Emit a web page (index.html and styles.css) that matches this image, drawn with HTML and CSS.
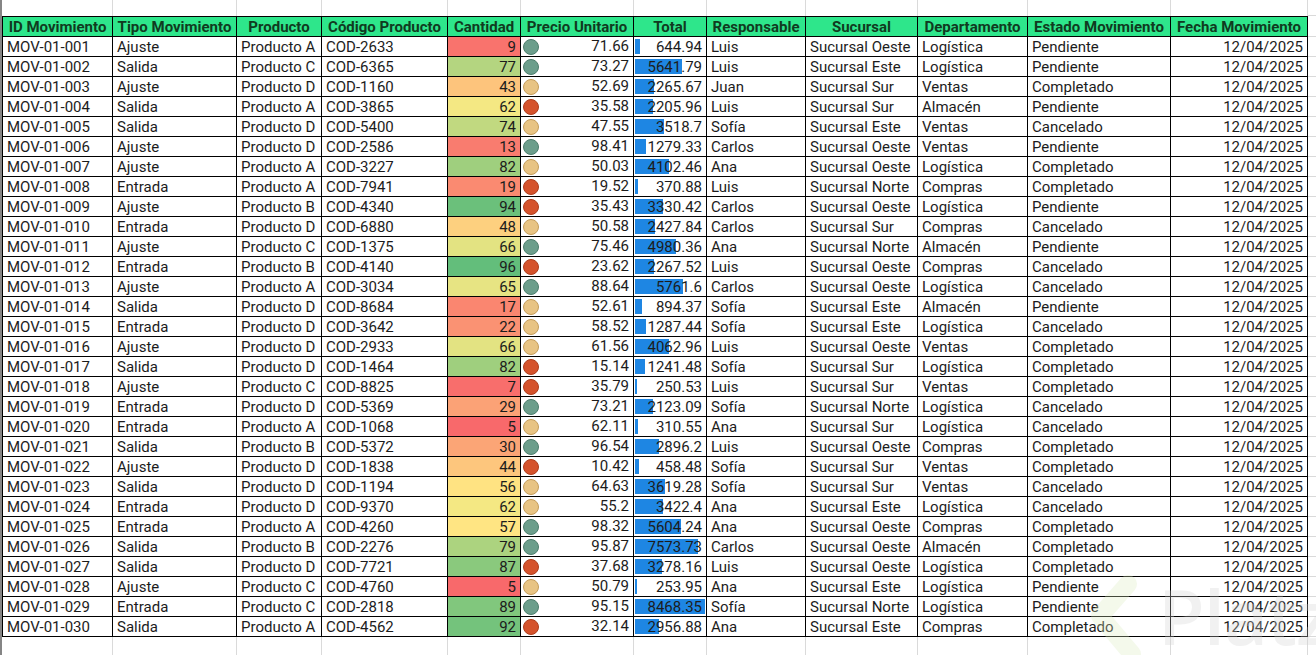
FILE: index.html
```html
<!DOCTYPE html>
<html lang="es">
<head>
<meta charset="utf-8">
<title>Movimientos</title>
<link rel="stylesheet" href="styles.css">
</head>
<body>
<div class="sheet">
  <div class="rowhdr"></div>
  <div class="grid">
    <div class="tr top"><div class="e"></div><div class="e"></div><div class="e"></div><div class="e"></div><div class="e"></div><div class="e"></div><div class="e"></div><div class="e"></div><div class="e"></div><div class="e"></div><div class="e"></div><div class="e"></div><div class="x"></div></div>
    <div class="tr head"><div class="c h">ID Movimiento</div><div class="c h">Tipo Movimiento</div><div class="c h">Producto</div><div class="c h">Código Producto</div><div class="c h">Cantidad</div><div class="c h">Precio Unitario</div><div class="c h">Total</div><div class="c h">Responsable</div><div class="c h">Sucursal</div><div class="c h">Departamento</div><div class="c h">Estado Movimiento</div><div class="c h">Fecha Movimiento</div><div class="x"></div></div>

    <div class="tr"><div class="c">MOV-01-001</div><div class="c">Ajuste</div><div class="c">Producto A</div><div class="c">COD-2633</div><div class="c num" style="background:rgb(249,115,109)">9</div><div class="c price"><i class="dot g"></i>71.66</div><div class="c num total" style="--w:5px">644.94</div><div class="c">Luis</div><div class="c">Sucursal Oeste</div><div class="c">Logística</div><div class="c">Pendiente</div><div class="c num">12/04/2025</div><div class="x"></div></div>
    <div class="tr"><div class="c">MOV-01-002</div><div class="c">Salida</div><div class="c">Producto C</div><div class="c">COD-6365</div><div class="c num" style="background:rgb(180,213,128)">77</div><div class="c price"><i class="dot g"></i>73.27</div><div class="c num total" style="--w:47px">5641.79</div><div class="c">Luis</div><div class="c">Sucursal Este</div><div class="c">Logística</div><div class="c">Pendiente</div><div class="c num">12/04/2025</div><div class="x"></div></div>
    <div class="tr"><div class="c">MOV-01-003</div><div class="c">Ajuste</div><div class="c">Producto D</div><div class="c">COD-1160</div><div class="c num" style="background:rgb(253,196,124)">43</div><div class="c price"><i class="dot y"></i>52.69</div><div class="c num total" style="--w:19px">2265.67</div><div class="c">Juan</div><div class="c">Sucursal Sur</div><div class="c">Ventas</div><div class="c">Completado</div><div class="c num">12/04/2025</div><div class="x"></div></div>
    <div class="tr"><div class="c">MOV-01-004</div><div class="c">Salida</div><div class="c">Producto A</div><div class="c">COD-3865</div><div class="c num" style="background:rgb(244,232,131)">62</div><div class="c price"><i class="dot r"></i>35.58</div><div class="c num total" style="--w:18px">2205.96</div><div class="c">Luis</div><div class="c">Sucursal Sur</div><div class="c">Almacén</div><div class="c">Pendiente</div><div class="c num">12/04/2025</div><div class="x"></div></div>
    <div class="tr"><div class="c">MOV-01-005</div><div class="c">Salida</div><div class="c">Producto D</div><div class="c">COD-5400</div><div class="c num" style="background:rgb(193,217,128)">74</div><div class="c price"><i class="dot y"></i>47.55</div><div class="c num total" style="--w:29px">3518.7</div><div class="c">Sofía</div><div class="c">Sucursal Este</div><div class="c">Ventas</div><div class="c">Cancelado</div><div class="c num">12/04/2025</div><div class="x"></div></div>
    <div class="tr"><div class="c">MOV-01-006</div><div class="c">Ajuste</div><div class="c">Producto D</div><div class="c">COD-2586</div><div class="c num" style="background:rgb(249,124,111)">13</div><div class="c price"><i class="dot g"></i>98.41</div><div class="c num total" style="--w:11px">1279.33</div><div class="c">Carlos</div><div class="c">Sucursal Oeste</div><div class="c">Ventas</div><div class="c">Pendiente</div><div class="c num">12/04/2025</div><div class="x"></div></div>
    <div class="tr"><div class="c">MOV-01-007</div><div class="c">Ajuste</div><div class="c">Producto A</div><div class="c">COD-3227</div><div class="c num" style="background:rgb(159,207,126)">82</div><div class="c price"><i class="dot y"></i>50.03</div><div class="c num total" style="--w:34px">4102.46</div><div class="c">Ana</div><div class="c">Sucursal Oeste</div><div class="c">Logística</div><div class="c">Completado</div><div class="c num">12/04/2025</div><div class="x"></div></div>
    <div class="tr"><div class="c">MOV-01-008</div><div class="c">Entrada</div><div class="c">Producto A</div><div class="c">COD-7941</div><div class="c num" style="background:rgb(250,138,113)">19</div><div class="c price"><i class="dot r"></i>19.52</div><div class="c num total" style="--w:3px">370.88</div><div class="c">Luis</div><div class="c">Sucursal Norte</div><div class="c">Compras</div><div class="c">Completado</div><div class="c num">12/04/2025</div><div class="x"></div></div>
    <div class="tr"><div class="c">MOV-01-009</div><div class="c">Ajuste</div><div class="c">Producto B</div><div class="c">COD-4340</div><div class="c num" style="background:rgb(107,192,123)">94</div><div class="c price"><i class="dot r"></i>35.43</div><div class="c num total" style="--w:28px">3330.42</div><div class="c">Carlos</div><div class="c">Sucursal Oeste</div><div class="c">Logística</div><div class="c">Pendiente</div><div class="c num">12/04/2025</div><div class="x"></div></div>
    <div class="tr"><div class="c">MOV-01-010</div><div class="c">Entrada</div><div class="c">Producto D</div><div class="c">COD-6880</div><div class="c num" style="background:rgb(253,208,127)">48</div><div class="c price"><i class="dot y"></i>50.58</div><div class="c num total" style="--w:20px">2427.84</div><div class="c">Carlos</div><div class="c">Sucursal Sur</div><div class="c">Compras</div><div class="c">Cancelado</div><div class="c num">12/04/2025</div><div class="x"></div></div>
    <div class="tr"><div class="c">MOV-01-011</div><div class="c">Ajuste</div><div class="c">Producto C</div><div class="c">COD-1375</div><div class="c num" style="background:rgb(227,227,130)">66</div><div class="c price"><i class="dot g"></i>75.46</div><div class="c num total" style="--w:41px">4980.36</div><div class="c">Ana</div><div class="c">Sucursal Norte</div><div class="c">Almacén</div><div class="c">Pendiente</div><div class="c num">12/04/2025</div><div class="x"></div></div>
    <div class="tr"><div class="c">MOV-01-012</div><div class="c">Entrada</div><div class="c">Producto B</div><div class="c">COD-4140</div><div class="c num" style="background:rgb(99,190,123)">96</div><div class="c price"><i class="dot r"></i>23.62</div><div class="c num total" style="--w:19px">2267.52</div><div class="c">Luis</div><div class="c">Sucursal Oeste</div><div class="c">Compras</div><div class="c">Cancelado</div><div class="c num">12/04/2025</div><div class="x"></div></div>
    <div class="tr"><div class="c">MOV-01-013</div><div class="c">Ajuste</div><div class="c">Producto A</div><div class="c">COD-3034</div><div class="c num" style="background:rgb(231,228,131)">65</div><div class="c price"><i class="dot g"></i>88.64</div><div class="c num total" style="--w:48px">5761.6</div><div class="c">Carlos</div><div class="c">Sucursal Oeste</div><div class="c">Logística</div><div class="c">Cancelado</div><div class="c num">12/04/2025</div><div class="x"></div></div>
    <div class="tr"><div class="c">MOV-01-014</div><div class="c">Salida</div><div class="c">Producto D</div><div class="c">COD-8684</div><div class="c num" style="background:rgb(250,134,112)">17</div><div class="c price"><i class="dot y"></i>52.61</div><div class="c num total" style="--w:7px">894.37</div><div class="c">Sofía</div><div class="c">Sucursal Este</div><div class="c">Almacén</div><div class="c">Pendiente</div><div class="c num">12/04/2025</div><div class="x"></div></div>
    <div class="tr"><div class="c">MOV-01-015</div><div class="c">Entrada</div><div class="c">Producto D</div><div class="c">COD-3642</div><div class="c num" style="background:rgb(250,146,115)">22</div><div class="c price"><i class="dot y"></i>58.52</div><div class="c num total" style="--w:11px">1287.44</div><div class="c">Sofía</div><div class="c">Sucursal Este</div><div class="c">Logística</div><div class="c">Cancelado</div><div class="c num">12/04/2025</div><div class="x"></div></div>
    <div class="tr"><div class="c">MOV-01-016</div><div class="c">Ajuste</div><div class="c">Producto D</div><div class="c">COD-2933</div><div class="c num" style="background:rgb(227,227,130)">66</div><div class="c price"><i class="dot y"></i>61.56</div><div class="c num total" style="--w:34px">4062.96</div><div class="c">Luis</div><div class="c">Sucursal Oeste</div><div class="c">Ventas</div><div class="c">Completado</div><div class="c num">12/04/2025</div><div class="x"></div></div>
    <div class="tr"><div class="c">MOV-01-017</div><div class="c">Salida</div><div class="c">Producto D</div><div class="c">COD-1464</div><div class="c num" style="background:rgb(159,207,126)">82</div><div class="c price"><i class="dot r"></i>15.14</div><div class="c num total" style="--w:10px">1241.48</div><div class="c">Sofía</div><div class="c">Sucursal Sur</div><div class="c">Logística</div><div class="c">Completado</div><div class="c num">12/04/2025</div><div class="x"></div></div>
    <div class="tr"><div class="c">MOV-01-018</div><div class="c">Ajuste</div><div class="c">Producto C</div><div class="c">COD-8825</div><div class="c num" style="background:rgb(248,110,108)">7</div><div class="c price"><i class="dot r"></i>35.79</div><div class="c num total" style="--w:2px">250.53</div><div class="c">Luis</div><div class="c">Sucursal Sur</div><div class="c">Ventas</div><div class="c">Completado</div><div class="c num">12/04/2025</div><div class="x"></div></div>
    <div class="tr"><div class="c">MOV-01-019</div><div class="c">Entrada</div><div class="c">Producto D</div><div class="c">COD-5369</div><div class="c num" style="background:rgb(251,162,118)">29</div><div class="c price"><i class="dot g"></i>73.21</div><div class="c num total" style="--w:18px">2123.09</div><div class="c">Sofía</div><div class="c">Sucursal Norte</div><div class="c">Logística</div><div class="c">Cancelado</div><div class="c num">12/04/2025</div><div class="x"></div></div>
    <div class="tr"><div class="c">MOV-01-020</div><div class="c">Entrada</div><div class="c">Producto A</div><div class="c">COD-1068</div><div class="c num" style="background:rgb(248,105,107)">5</div><div class="c price"><i class="dot y"></i>62.11</div><div class="c num total" style="--w:3px">310.55</div><div class="c">Ana</div><div class="c">Sucursal Sur</div><div class="c">Logística</div><div class="c">Cancelado</div><div class="c num">12/04/2025</div><div class="x"></div></div>
    <div class="tr"><div class="c">MOV-01-021</div><div class="c">Salida</div><div class="c">Producto B</div><div class="c">COD-5372</div><div class="c num" style="background:rgb(251,165,118)">30</div><div class="c price"><i class="dot g"></i>96.54</div><div class="c num total" style="--w:24px">2896.2</div><div class="c">Luis</div><div class="c">Sucursal Oeste</div><div class="c">Compras</div><div class="c">Completado</div><div class="c num">12/04/2025</div><div class="x"></div></div>
    <div class="tr"><div class="c">MOV-01-022</div><div class="c">Ajuste</div><div class="c">Producto D</div><div class="c">COD-1838</div><div class="c num" style="background:rgb(253,198,125)">44</div><div class="c price"><i class="dot r"></i>10.42</div><div class="c num total" style="--w:4px">458.48</div><div class="c">Sofía</div><div class="c">Sucursal Sur</div><div class="c">Ventas</div><div class="c">Completado</div><div class="c num">12/04/2025</div><div class="x"></div></div>
    <div class="tr"><div class="c">MOV-01-023</div><div class="c">Salida</div><div class="c">Producto D</div><div class="c">COD-1194</div><div class="c num" style="background:rgb(255,227,130)">56</div><div class="c price"><i class="dot y"></i>64.63</div><div class="c num total" style="--w:30px">3619.28</div><div class="c">Sofía</div><div class="c">Sucursal Sur</div><div class="c">Ventas</div><div class="c">Cancelado</div><div class="c num">12/04/2025</div><div class="x"></div></div>
    <div class="tr"><div class="c">MOV-01-024</div><div class="c">Entrada</div><div class="c">Producto D</div><div class="c">COD-9370</div><div class="c num" style="background:rgb(244,232,131)">62</div><div class="c price"><i class="dot y"></i>55.2</div><div class="c num total" style="--w:28px">3422.4</div><div class="c">Ana</div><div class="c">Sucursal Este</div><div class="c">Logística</div><div class="c">Cancelado</div><div class="c num">12/04/2025</div><div class="x"></div></div>
    <div class="tr"><div class="c">MOV-01-025</div><div class="c">Entrada</div><div class="c">Producto A</div><div class="c">COD-4260</div><div class="c num" style="background:rgb(255,229,131)">57</div><div class="c price"><i class="dot g"></i>98.32</div><div class="c num total" style="--w:46px">5604.24</div><div class="c">Ana</div><div class="c">Sucursal Oeste</div><div class="c">Compras</div><div class="c">Completado</div><div class="c num">12/04/2025</div><div class="x"></div></div>
    <div class="tr"><div class="c">MOV-01-026</div><div class="c">Salida</div><div class="c">Producto B</div><div class="c">COD-2276</div><div class="c num" style="background:rgb(172,211,127)">79</div><div class="c price"><i class="dot g"></i>95.87</div><div class="c num total" style="--w:63px">7573.73</div><div class="c">Carlos</div><div class="c">Sucursal Oeste</div><div class="c">Almacén</div><div class="c">Completado</div><div class="c num">12/04/2025</div><div class="x"></div></div>
    <div class="tr"><div class="c">MOV-01-027</div><div class="c">Salida</div><div class="c">Producto D</div><div class="c">COD-7721</div><div class="c num" style="background:rgb(138,201,125)">87</div><div class="c price"><i class="dot r"></i>37.68</div><div class="c num total" style="--w:27px">3278.16</div><div class="c">Luis</div><div class="c">Sucursal Oeste</div><div class="c">Logística</div><div class="c">Completado</div><div class="c num">12/04/2025</div><div class="x"></div></div>
    <div class="tr"><div class="c">MOV-01-028</div><div class="c">Ajuste</div><div class="c">Producto C</div><div class="c">COD-4760</div><div class="c num" style="background:rgb(248,105,107)">5</div><div class="c price"><i class="dot y"></i>50.79</div><div class="c num total" style="--w:2px">253.95</div><div class="c">Ana</div><div class="c">Sucursal Este</div><div class="c">Logística</div><div class="c">Pendiente</div><div class="c num">12/04/2025</div><div class="x"></div></div>
    <div class="tr"><div class="c">MOV-01-029</div><div class="c">Entrada</div><div class="c">Producto C</div><div class="c">COD-2818</div><div class="c num" style="background:rgb(129,199,125)">89</div><div class="c price"><i class="dot g"></i>95.15</div><div class="c num total" style="--w:70px">8468.35</div><div class="c">Sofía</div><div class="c">Sucursal Norte</div><div class="c">Logística</div><div class="c">Pendiente</div><div class="c num">12/04/2025</div><div class="x"></div></div>
    <div class="tr"><div class="c">MOV-01-030</div><div class="c">Salida</div><div class="c">Producto A</div><div class="c">COD-4562</div><div class="c num" style="background:rgb(116,195,124)">92</div><div class="c price"><i class="dot r"></i>32.14</div><div class="c num total" style="--w:24px">2956.88</div><div class="c">Ana</div><div class="c">Sucursal Este</div><div class="c">Compras</div><div class="c">Completado</div><div class="c num">12/04/2025</div><div class="x"></div></div>

    <div class="tr bottom"><div class="e"></div><div class="e"></div><div class="e"></div><div class="e"></div><div class="e"></div><div class="e"></div><div class="e"></div><div class="e"></div><div class="e"></div><div class="e"></div><div class="e"></div><div class="e"></div><div class="x"></div></div>
  </div>
  <div class="watermark" aria-hidden="true">
    <svg class="wm-logo" width="64" height="90" viewBox="0 0 64 90"><path d="M40 10 L12 42 L44 80" fill="none" stroke="#dcedc0" stroke-width="18" stroke-linejoin="round" stroke-linecap="round"/></svg>
    <span class="wm-text">Platzi</span>
  </div>
</div>
</body>
</html>
```

FILE: styles.css
```css
html, body {
  margin: 0;
  padding: 0;
  background: #ffffff;
  overflow: hidden;
}

body {
  width: 1316px;
  height: 655px;
  font-family: Roboto, "Noto Sans", "Liberation Sans", sans-serif;
  font-size: 15px;
  color: #1c1c1c;
}

.sheet {
  position: relative;
  display: flex;
  height: 655px;
  overflow: hidden;
}

.rowhdr {
  width: 2px;
  flex: none;
  background: #858585;
}

.grid {
  flex: 1;
  display: grid;
  grid-template-columns: 111px 124px 85px 126px 73px 113px 73px 99px 112px 110px 143px 137px 1fr;
  grid-template-rows: 16px 21px repeat(30, 20px) 1fr;
}

.tr {
  display: contents;
}

.c {
  box-sizing: border-box;
  border-right: 1px solid #000;
  border-bottom: 1px solid #000;
  padding: 0 4px;
  line-height: 21px;
  white-space: nowrap;
  overflow: hidden;
}

.tr > .c:first-child {
  border-left: 1px solid #000;
}

.head .c {
  border-top: 1px solid #000;
}

.h {
  background: #2ee68b;
  color: #103a20;
  font-weight: 700;
  font-size: 15px;
  text-align: center;
  padding: 0 1px;
}

.num {
  text-align: right;
}

.price {
  display: flex;
  align-items: center;
  justify-content: space-between;
  padding: 0 4px 0 2px;
}

.dot {
  display: block;
  box-sizing: border-box;
  width: 16px;
  height: 16px;
  border-radius: 50%;
  border: 1px solid;
}

.dot.g {
  background: #6c9e8c;
  border-color: #4d7d6c;
}

.dot.y {
  background: #e8c484;
  border-color: #c49c5a;
}

.dot.r {
  background: #d5532c;
  border-color: #ad3d1c;
}

.total {
  background-image: linear-gradient(#1e86e3, #1e86e3);
  background-repeat: no-repeat;
  background-position: 1px 2px;
  background-size: var(--w) 15px;
}

.e {
  border-right: 1px solid #dadada;
}

.x {
  border-bottom: 1px solid #dadada;
}

.bottom .x {
  border-bottom: none;
}

.watermark {
  position: absolute;
  left: 1088px;
  top: 574px;
  width: 230px;
  height: 90px;
  pointer-events: none;
  opacity: 0.3;
}

.wm-logo {
  position: absolute;
  left: 0;
  top: 0;
}

.wm-text {
  position: absolute;
  left: 70px;
  top: 0;
  font-family: "Open Sans", "Liberation Sans", sans-serif;
  font-size: 76px;
  line-height: 84px;
  font-weight: 600;
  color: #d2d2d2;
  letter-spacing: -1px;
}
```
